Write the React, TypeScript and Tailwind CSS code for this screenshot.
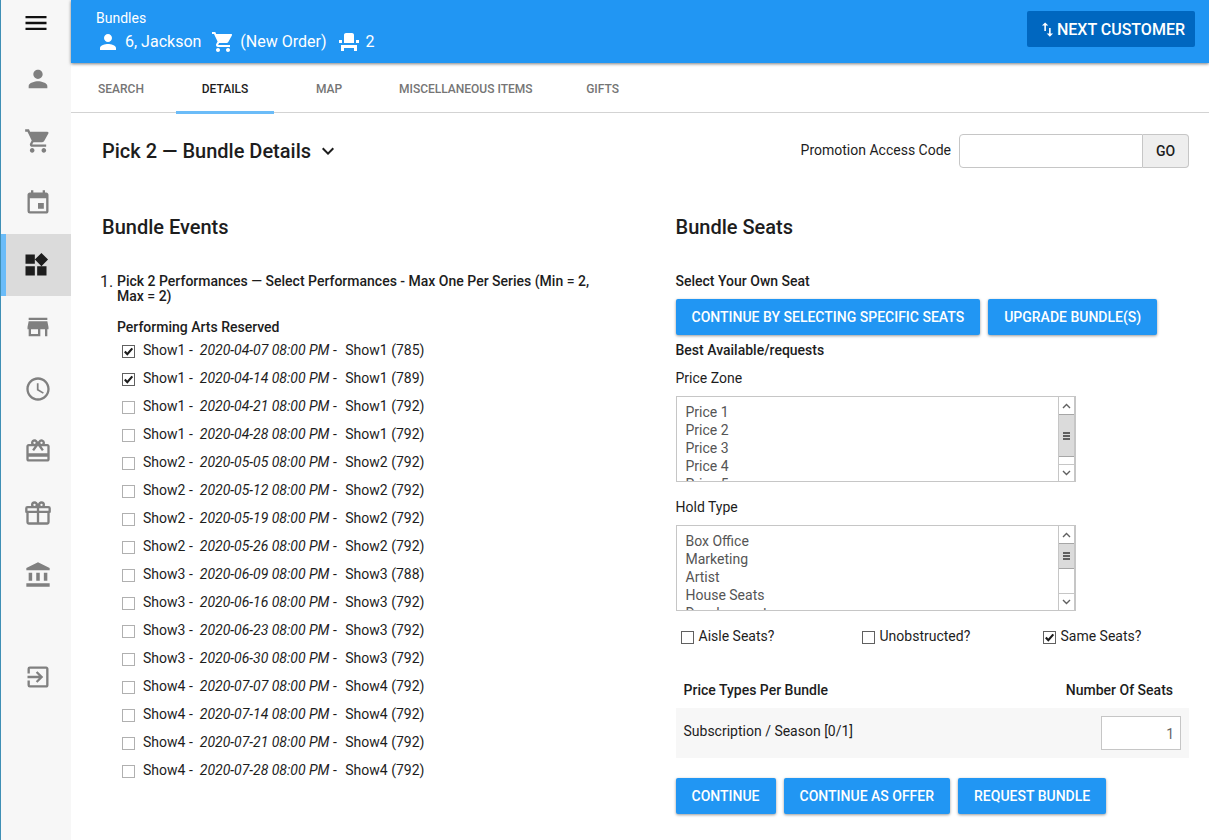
import type { ComponentType, InputHTMLAttributes, ReactNode } from 'react'
import {
  MdAccessTime,
  MdAccountBalance,
  MdCardGiftcard,
  MdEvent,
  MdEventSeat,
  MdExitToApp,
  MdImportExport,
  MdKeyboardArrowDown,
  MdMenu,
  MdPerson,
  MdShoppingCart,
  MdStore,
  MdWidgets,
} from 'react-icons/md'

type IconType = ComponentType<{ className?: string }>

function GiftOutline({ className }: { className?: string }) {
  return (
    <svg viewBox="0 0 24 24" fill="currentColor" className={className}>
      <path d="M22,12V20A2,2 0 0,1 20,22H4A2,2 0 0,1 2,20V12A1,1 0 0,1 1,11V8A2,2 0 0,1 3,6H6.17C6.06,5.69 6,5.35 6,5A3,3 0 0,1 9,2C10,2 10.88,2.5 11.43,3.24V3.23L12,4L12.57,3.23V3.24C13.12,2.5 14,2 15,2A3,3 0 0,1 18,5C18,5.35 17.94,5.69 17.83,6H21A2,2 0 0,1 23,8V11A1,1 0 0,1 22,12M4,20H11V12H4V20M20,20V12H13V20H20M9,4A1,1 0 0,0 8,5A1,1 0 0,0 9,6A1,1 0 0,0 10,5A1,1 0 0,0 9,4M15,4A1,1 0 0,0 14,5A1,1 0 0,0 15,6A1,1 0 0,0 16,5A1,1 0 0,0 15,4M3,8V10H11V8H3M13,8V10H21V8H13Z" />
    </svg>
  )
}

const NAV: { label: string; icon: IconType; active?: boolean }[] = [
  { label: 'Customers', icon: MdPerson },
  { label: 'Orders', icon: MdShoppingCart },
  { label: 'Events', icon: MdEvent },
  { label: 'Bundles', icon: MdWidgets, active: true },
  { label: 'Store', icon: MdStore },
  { label: 'History', icon: MdAccessTime },
  { label: 'Gift cards', icon: MdCardGiftcard },
  { label: 'Gifts', icon: GiftOutline },
  { label: 'Accounts', icon: MdAccountBalance },
]

const TABS = ['Search', 'Details', 'Map', 'Miscellaneous Items', 'Gifts']

const PERFORMANCES = [
  { show: 'Show1', date: '2020-04-07', left: 785, picked: true },
  { show: 'Show1', date: '2020-04-14', left: 789, picked: true },
  { show: 'Show1', date: '2020-04-21', left: 792 },
  { show: 'Show1', date: '2020-04-28', left: 792 },
  { show: 'Show2', date: '2020-05-05', left: 792 },
  { show: 'Show2', date: '2020-05-12', left: 792 },
  { show: 'Show2', date: '2020-05-19', left: 792 },
  { show: 'Show2', date: '2020-05-26', left: 792 },
  { show: 'Show3', date: '2020-06-09', left: 788 },
  { show: 'Show3', date: '2020-06-16', left: 792 },
  { show: 'Show3', date: '2020-06-23', left: 792 },
  { show: 'Show3', date: '2020-06-30', left: 792 },
  { show: 'Show4', date: '2020-07-07', left: 792 },
  { show: 'Show4', date: '2020-07-14', left: 792 },
  { show: 'Show4', date: '2020-07-21', left: 792 },
  { show: 'Show4', date: '2020-07-28', left: 792 },
]

const PRICE_ZONES = ['Price 1', 'Price 2', 'Price 3', 'Price 4', 'Price 5']
const HOLD_TYPES = ['Box Office', 'Marketing', 'Artist', 'House Seats', 'Development']

function Sidebar() {
  return (
    <aside className="w-[71px] shrink-0 border-l border-[#3f8fb5] bg-[#f7f7f7]">
      <button aria-label="Menu" className="flex h-[46px] w-full items-center justify-center">
        <MdMenu className="size-7 text-[#111]" />
      </button>
      <nav className="mt-[2px]">
        {NAV.map(({ label, icon: Icon, active }) => (
          <a
            key={label}
            href="#"
            aria-label={label}
            className={
              active
                ? 'flex h-[62px] items-center justify-center border-l-[5px] border-[#6bbcf8] bg-[#dbdbdb] pr-[5px] text-[#1d1d1d]'
                : 'flex h-[62px] items-center justify-center pl-1 text-[#808080]'
            }
          >
            <Icon className="size-7" />
          </a>
        ))}
        <a href="#" aria-label="Sign out" className="mt-10 flex h-[62px] items-center justify-center pl-1 text-[#808080]">
          <MdExitToApp className="size-7" />
        </a>
      </nav>
    </aside>
  )
}

function Header() {
  return (
    <header className="relative flex h-[63px] items-start justify-between bg-[#2196f3] pl-[25px] pr-[14px] text-white shadow-[0_1px_3px_rgba(0,0,0,0.5)]">
      <div className="pt-2">
        <div className="text-sm leading-5">Bundles</div>
        <div className="flex items-center gap-[5px] pt-[2px] text-base leading-6">
          <MdPerson className="size-6" />
          <span className="mr-[5px]">6, Jackson</span>
          <MdShoppingCart className="size-6" />
          <span className="mr-[5px]">(New Order)</span>
          <MdEventSeat className="size-6" />
          <span>2</span>
        </div>
      </div>
      <button className="mt-[11px] flex h-9 items-center rounded-xs bg-[#0067c0] pt-px pl-[11px] pr-[10px] text-base font-medium uppercase">
        <MdImportExport className="size-[19px]" />
        Next Customer
      </button>
    </header>
  )
}

function Tabs() {
  return (
    <nav className="flex h-[50px] gap-[6px] border-b border-[#d3d3d3] pl-px text-xs font-medium uppercase">
      {TABS.map(tab => (
        <a
          key={tab}
          href="#"
          className={
            tab === 'Details'
              ? '-mb-[2px] flex min-w-[98px] items-center justify-center border-b-[3px] border-[#6bbcf8] px-[15px] pt-[3px] text-[#1d1d1d]'
              : 'flex min-w-[98px] items-center justify-center px-[15px] pt-[2px] text-[#757575]'
          }
        >
          {tab}
        </a>
      ))}
    </nav>
  )
}

function Checkbox({ faint, ...props }: InputHTMLAttributes<HTMLInputElement> & { faint?: boolean }) {
  return (
    <span className="grid shrink-0 place-items-center">
      <input
        type="checkbox"
        className={
          faint
            ? 'peer col-start-1 row-start-1 size-[13px] appearance-none border border-[#b0b0b0] bg-white checked:border-[#606060]'
            : 'peer col-start-1 row-start-1 size-[13px] appearance-none border border-[#606060] bg-white'
        }
        {...props}
      />
      <svg
        viewBox="0 0 13 13"
        fill="none"
        stroke="#1d1d1d"
        strokeWidth="2.2"
        className="pointer-events-none invisible col-start-1 row-start-1 size-[13px] peer-checked:visible"
      >
        <path d="M2.8 6.6 5.3 9.2 10.3 3.4" />
      </svg>
    </span>
  )
}

function Button({ children }: { children: ReactNode }) {
  return (
    <button className="h-9 rounded-xs bg-[#2196f3] px-4 text-sm font-medium whitespace-nowrap text-white uppercase shadow-[0_1px_3px_rgba(0,0,0,0.4)]">
      {children}
    </button>
  )
}

function ListBox({ id, label, options, thumb }: { id: string; label: string; options: string[]; thumb: string }) {
  return (
    <div>
      <label htmlFor={id} className="block leading-5">{label}</label>
      <div className="mt-2 flex h-[86px] w-[400px] max-w-full border border-[#c6c6c6]">
        <select id={id} multiple className="h-full min-w-0 flex-1 overflow-hidden px-[9px] pt-[7px] text-[#555] outline-none">
          {options.map(o => (
            <option key={o} className="h-[18px] p-0 leading-[18px]">{o}</option>
          ))}
        </select>
        <div aria-hidden="true" className="flex w-[17px] flex-col border-x border-[#c6c6c6]">
          <span className="grid h-[17px] place-items-center text-[#606060]">
            <svg viewBox="0 0 9 6" fill="none" stroke="currentColor" strokeWidth="1.4" className="h-[6px] w-[9px]">
              <path d="M1 5 4.5 1.5 8 5" />
            </svg>
          </span>
          <span className={`flex flex-col items-center justify-center gap-px border-y border-[#a6a6a6] bg-[#dbdbdb] ${thumb}`}>
            <i className="h-[2px] w-[7px] bg-[#606060]" />
            <i className="h-[2px] w-[7px] bg-[#606060]" />
            <i className="h-[2px] w-[7px] bg-[#606060]" />
          </span>
          <span className="mt-auto grid h-[17px] place-items-center border-t border-[#c6c6c6] text-[#606060]">
            <svg viewBox="0 0 9 6" fill="none" stroke="currentColor" strokeWidth="1.4" className="h-[6px] w-[9px]">
              <path d="M1 1 4.5 4.5 8 1" />
            </svg>
          </span>
        </div>
      </div>
    </div>
  )
}

function BundleEvents() {
  return (
    <section>
      <h2 className="text-xl leading-6 font-medium">Bundle Events</h2>
      <div className="mt-[34px] flex gap-1">
        <span className="-ml-[2px] w-[13px] text-base leading-[18px] whitespace-nowrap">1.</span>
        <div className="min-w-0 flex-1">
          <p className="pt-[1px] leading-[15px] font-medium">
            Pick 2 Performances — Select Performances - Max One Per Series (Min = 2, Max = 2)
          </p>
          <fieldset>
            <legend className="pt-[14px] pb-px leading-[18px] font-medium">Performing Arts Reserved</legend>
            {PERFORMANCES.map(p => (
              <label key={p.date} className="flex h-7 items-center gap-2 pl-[5px]">
                <Checkbox faint defaultChecked={p.picked} />
                <span className="flex pb-[2px] whitespace-pre">
                  {p.show} -
                  <em className="ml-[7px]">{p.date} 08:00 PM</em> - <span className="ml-[5px]">{p.show} ({p.left})</span>
                </span>
              </label>
            ))}
          </fieldset>
        </div>
      </div>
    </section>
  )
}

function BundleSeats() {
  return (
    <section>
      <h2 className="text-xl leading-6 font-medium">Bundle Seats</h2>
      <h3 className="mt-8 leading-5 font-medium">Select Your Own Seat</h3>
      <div className="mt-2 flex gap-2">
        <Button>Continue by selecting specific seats</Button>
        <Button>Upgrade Bundle(s)</Button>
      </div>
      <h3 className="mt-[5px] mb-2 leading-5 font-medium">Best Available/requests</h3>
      <div className="space-y-[15px]">
        <ListBox id="price-zone" label="Price Zone" options={PRICE_ZONES} thumb="h-[43px]" />
        <ListBox id="hold-type" label="Hold Type" options={HOLD_TYPES} thumb="h-[26px]" />
      </div>
      <div className="mt-[15px] flex pl-[5px] leading-5">
        {['Aisle Seats?', 'Unobstructed?', 'Same Seats?'].map(name => (
          <label key={name} className="flex w-[181px] items-center gap-[5px] last:w-auto">
            <span className="pt-[2px]"><Checkbox defaultChecked={name === 'Same Seats?'} /></span>
            {name}
          </label>
        ))}
      </div>
      <table className="mt-[26px] w-full">
        <thead>
          <tr className="h-9">
            <th className="pl-2 text-left font-medium">Price Types Per Bundle</th>
            <th className="pr-4 text-right font-medium">Number Of Seats</th>
          </tr>
        </thead>
        <tbody>
          <tr className="h-[50px] bg-[#f7f7f7]">
            <td className="pb-1 pl-2"><label htmlFor="seats">Subscription / Season [0/1]</label></td>
            <td className="pr-2">
              <input
                id="seats"
                defaultValue="1"
                className="ml-auto block h-[34px] w-20 border border-[#c6c6c6] bg-white px-[6px] pt-[2px] text-right text-[#666]"
              />
            </td>
          </tr>
        </tbody>
      </table>
      <div className="mt-5 flex gap-2">
        <Button>Continue</Button>
        <Button>Continue as offer</Button>
        <Button>Request bundle</Button>
      </div>
    </section>
  )
}

export default function App() {
  return (
    <div className="flex min-h-screen bg-white font-['Roboto',sans-serif] text-sm text-[#1d1d1d]">
      <Sidebar />
      <div className="min-w-0 flex-1">
        <Header />
        <Tabs />
        <main className="pt-[21px] pr-5 pb-[26px] pl-[31px]">
          <div className="flex items-center justify-between">
            <h1 className="flex items-center gap-[5px] text-xl leading-6 font-medium">
              Pick 2 — Bundle Details
              <button aria-label="Switch bundle"><MdKeyboardArrowDown className="size-6" /></button>
            </h1>
            <form className="flex items-center">
              <label htmlFor="promo" className="mr-2 pb-[2px]">Promotion Access Code</label>
              <input id="promo" className="h-[34px] w-[184px] rounded-l border border-[#c6c6c6] px-2" />
              <button type="button" className="h-[34px] w-[46px] rounded-r border border-l-0 border-[#c6c6c6] bg-[#eee] font-medium">GO</button>
            </form>
          </div>
          <div className="mt-[47px] grid grid-cols-2 gap-[60px]">
            <BundleEvents />
            <BundleSeats />
          </div>
        </main>
      </div>
    </div>
  )
}
